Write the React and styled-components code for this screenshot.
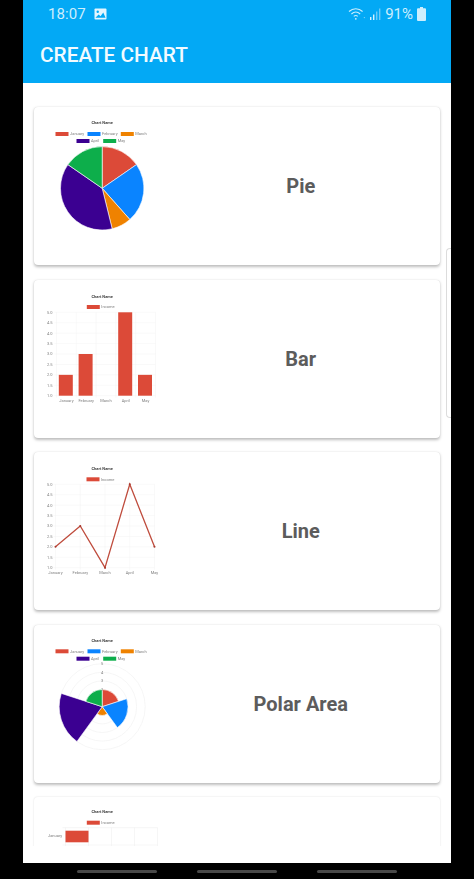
import React from "react";
import styled, { createGlobalStyle } from "styled-components";

const RED = "#dc4a38", BLUE = "#0a84ff", ORANGE = "#ef8200", PURPLE = "#3b0091", GREEN = "#0dae4b";
const COLORS = [RED, BLUE, ORANGE, PURPLE, GREEN];
const MONTHS = ["January", "February", "March", "April", "May"];
const DATA = [2, 3, 1, 5, 2];
const FONT = `Roboto, "Liberation Sans", sans-serif`;

const Global = createGlobalStyle`
  html, body { margin: 0; padding: 0; background: #000; }
  body { font-family: ${FONT}; }
`;

const Page = styled.div`
  width: 474px; height: 879px; background: #000; overflow: hidden;
  display: flex; flex-direction: column; align-items: center;
`;
const Screen = styled.div`
  position: relative; width: 428px; height: 863px; background: #fff;
  display: flex; flex-direction: column;
`;
const Header = styled.header`
  height: 83px; background: #03a9f5; color: #fff; flex: none;
  display: flex; flex-direction: column;
`;
const StatusBar = styled.div`
  height: 27px; padding: 0 25px; display: flex; align-items: center;
  justify-content: space-between; color: #cdeefd; font-size: 15px;
`;
const StatusGroup = styled.div`display: flex; align-items: center; gap: ${p => p.$gap}px;`;
const Clock = styled.span`letter-spacing: 0.1px;`;
const Toolbar = styled.div`
  flex: 1; display: flex; align-items: center; padding: 0 17px;
  font-size: 20.8px; font-weight: 500; color: #f2fbff;
`;
const Content = styled.main`
  height: 763px; flex: none; overflow: hidden; padding: 24px 11px 0 10.5px;
  display: flex; flex-direction: column; gap: 14.5px; box-sizing: border-box;
`;
const Card = styled.section`
  flex: none; height: 158px; border-radius: 4px; background: #fff;
  box-shadow: ${p => (p.$faint
    ? "0 0 2px rgba(0,0,0,.14)"
    : "0 1.5px 3px rgba(0,0,0,.26), 0 0 1px rgba(0,0,0,.1)")};
  display: grid; grid-template-columns: 128px 1fr; align-items: center;
`;
const CardLabel = styled.h2`
  margin: 0; text-align: center; color: #5c5c5c;
  font-size: 20px; font-weight: 700; font-family: ${FONT};
`;
const ChartSvg = styled.svg`
  display: block; width: 130px; height: 158px; overflow: visible; filter: blur(0.4px);
`;
const Handle = styled.div`
  position: absolute; right: 0; top: 248px; width: 4px; height: 168px;
  border: 1px solid #dcdcdc; border-right: none; border-radius: 4px 0 0 4px;
`;
const NavBar = styled.nav`
  flex: none; height: 16px; display: flex; justify-content: center; align-items: center; gap: 40px;
`;
const NavPill = styled.span`width: 80px; height: 3px; border-radius: 2px; background: #484848;`;

const Title = ({ y }) => (
  <text x="101.7" y={y + 1.4} textAnchor="middle" fontSize="4" fontWeight="700" fill="#444" fontFamily={FONT}>Chart Name</text>
);
const Small = ({ x, y, anchor = "start", children }) => (
  <text x={x} y={y + 1.4} textAnchor={anchor} fontSize="4" fill="#808080" fontFamily={FONT}>{children}</text>
);
const LegendItem = ({ x, y, color, label }) => (
  <g>
    <rect x={x} y={y - 2} width="13" height="4" fill={color} />
    <Small x={x + 14.5} y={y}>{label}</Small>
  </g>
);
const FullLegend = ({ y1, y2 }) => (
  <g>
    <LegendItem x={55} y={y1} color={RED} label="January" />
    <LegendItem x={87} y={y1} color={BLUE} label="February" />
    <LegendItem x={120.3} y={y1} color={ORANGE} label="March" />
    <LegendItem x={76} y={y2} color={PURPLE} label="April" />
    <LegendItem x={102.7} y={y2} color={GREEN} label="May" />
  </g>
);
const Chart = ({ top, children }) => (
  <ChartSvg viewBox={`33.5 ${top} 130 158`}>{children}</ChartSvg>
);
const polar = (cx, cy, r, deg) => {
  const a = (deg * Math.PI) / 180;
  return [cx + r * Math.sin(a), cy - r * Math.cos(a)];
};
const sector = (cx, cy, r, a0, a1) => {
  const [x0, y0] = polar(cx, cy, r, a0);
  const [x1, y1] = polar(cx, cy, r, a1);
  return `M${cx} ${cy}L${x0} ${y0}A${r} ${r} 0 ${a1 - a0 > 180 ? 1 : 0} 1 ${x1} ${y1}Z`;
};

const PieChart = () => {
  const total = DATA.reduce((a, b) => a + b, 0);
  let angle = 0;
  return (
    <Chart top={107}>
      <Title y={123} />
      <FullLegend y1={134} y2={141} />
      {DATA.map((v, i) => {
        const from = angle;
        angle += (v / total) * 360;
        return <path key={i} d={sector(101.7, 188.3, 41.7, from, angle)} fill={COLORS[i]} stroke="#fff" strokeWidth="0.6" />;
      })}
    </Chart>
  );
};

const CartesianGrid = ({ left, right, top, bottom, xs }) => (
  <g stroke="#f0f0f0" strokeWidth="0.4">
    {[0, 1, 2, 3, 4, 5, 6, 7, 8].map(i => {
      const y = top + ((bottom - top) * i) / 8;
      return <line key={i} x1={left - 2} x2={right} y1={y} y2={y} />;
    })}
    {xs.map(x => <line key={x} x1={x} x2={x} y1={top} y2={bottom + 2} />)}
  </g>
);
const YTicks = ({ x, top, bottom }) => (
  <g>
    {["5.0", "4.5", "4.0", "3.5", "3.0", "2.5", "2.0", "1.5", "1.0"].map((t, i) => (
      <Small key={t} x={x} y={top + ((bottom - top) * i) / 8} anchor="end">{t}</Small>
    ))}
  </g>
);

const BarChart = () => {
  const top = 311.3, bottom = 394.7, left = 56, step = 19.8;
  const yOf = v => bottom - ((v - 1) / 4) * (bottom - top);
  return (
    <Chart top={279}>
      <Title y={295.3} />
      <LegendItem x={86.3} y={306} color={RED} label="Income" />
      <CartesianGrid left={left} right={155} top={top} bottom={bottom} xs={[0, 1, 2, 3, 4, 5].map(i => left + i * step)} />
      <YTicks x={52} top={top} bottom={bottom} />
      {DATA.map((v, i) => (
        <rect key={i} x={left + i * step + 2.3} y={yOf(v)} width="14" height={bottom - yOf(v)} fill={RED} />
      ))}
      {MONTHS.map((m, i) => <Small key={m} x={left + (i + 0.5) * step} y={399.5} anchor="middle">{m}</Small>)}
    </Chart>
  );
};

const LineChart = () => {
  const top = 483.3, bottom = 566.7, left = 55, step = 24.75;
  const pts = DATA.map((v, i) => [left + i * step, bottom - ((v - 1) / 4) * (bottom - top)]);
  return (
    <Chart top={451}>
      <Title y={467.3} />
      <LegendItem x={86} y={478.3} color={RED} label="Income" />
      <CartesianGrid left={left} right={154} top={top} bottom={bottom} xs={pts.map(p => p[0])} />
      <YTicks x={52} top={top} bottom={bottom} />
      <polyline points={pts.map(p => p.join(",")).join(" ")} fill="none" stroke="#bf4c3d" strokeWidth="1.3" />
      {pts.map(p => <circle key={p[0]} cx={p[0]} cy={p[1]} r="1" fill="#a83a2e" />)}
      {MONTHS.map((m, i) => <Small key={m} x={left + i * step} y={572} anchor="middle">{m}</Small>)}
    </Chart>
  );
};

const PolarChart = () => {
  const cx = 101.7, cy = 705.7, unit = 8.6;
  return (
    <Chart top={624}>
      <Title y={639.7} />
      <FullLegend y1={650.3} y2={657.7} />
      {[1, 2, 3, 4, 5].map(n => <circle key={n} cx={cx} cy={cy} r={n * unit} fill="none" stroke="#ececec" strokeWidth="0.5" />)}
      {DATA.map((v, i) => (
        <path key={i} d={sector(cx, cy, v * unit, i * 72, (i + 1) * 72)} fill={COLORS[i]} stroke="#fff" strokeWidth="0.6" />
      ))}
      {[2, 3, 4, 5].map(n => <Small key={n} x={cx} y={cy - n * unit} anchor="middle">{n}</Small>)}
    </Chart>
  );
};

const HorizontalChart = () => (
  <Chart top={797}>
    <Title y={811.7} />
    <LegendItem x={86.3} y={822.7} color={RED} label="Income" />
    <g stroke="#e8e8e8" strokeWidth="0.4">
      {[65, 88, 111, 134, 157].map(x => <line key={x} x1={x} x2={x} y1={827.7} y2={850} />)}
      <line x1="62" x2="157" y1="827.7" y2="827.7" />
      <line x1="62" x2="157" y1="845" y2="845" />
    </g>
    <rect x="65" y="830.7" width="23" height="11.6" fill={RED} />
    <Small x={61.7} y={836} anchor="end">January</Small>
  </Chart>
);

const PictureIcon = () => (
  <svg width="13" height="12" viewBox="0 0 14 13">
    <rect x="0.5" y="0.5" width="13" height="12" rx="1" fill="#e4f6ff" />
    <circle cx="4" cy="4" r="1.3" fill="#03a9f5" />
    <path d="M1.5 10.5 5 7l2 2 3-4 2.5 5.5z" fill="#03a9f5" />
  </svg>
);
const WifiIcon = () => (
  <svg width="18" height="14" viewBox="0 0 18 14" fill="none" stroke="#cdeefd" strokeWidth="1.1">
    <path d="M1 4.5C5 .8 10.6.8 14.6 4.5" />
    <path d="M3.4 7c2.7-2.4 6.1-2.4 8.8 0" />
    <path d="M5.8 9.4c1.3-1.1 2.7-1.1 4 0" />
    <circle cx="7.8" cy="11.8" r="0.9" fill="#cdeefd" stroke="none" />
    <circle cx="16.4" cy="10.6" r="0.7" fill="#cdeefd" stroke="none" opacity="0.6" />
  </svg>
);
const SignalIcon = () => (
  <svg width="11" height="12" viewBox="0 0 11 12">
    <rect x="0" y="9" width="1.4" height="3" fill="#d6f1fe" />
    <rect x="3" y="6.5" width="1.4" height="5.5" fill="#d6f1fe" />
    <rect x="6" y="3.5" width="1.4" height="8.5" fill="#6fcbf7" />
    <rect x="9" y="0.5" width="1.4" height="11.5" fill="#6fcbf7" />
  </svg>
);
const BatteryIcon = () => (
  <svg width="9" height="14" viewBox="0 0 9 14">
    <path d="M3 0h3v1.2h2a1 1 0 0 1 1 1V13a1 1 0 0 1-1 1H1a1 1 0 0 1-1-1V2.2a1 1 0 0 1 1-1h2z" fill="#cdeefd" />
  </svg>
);

const CHARTS = [
  ["Pie", PieChart],
  ["Bar", BarChart],
  ["Line", LineChart],
  ["Polar Area", PolarChart],
  ["Horizontal Bar", HorizontalChart],
];

export default function App() {
  return (
    <Page>
      <Global />
      <Screen>
        <Header>
          <StatusBar>
            <StatusGroup $gap={8}><Clock>18:07</Clock><PictureIcon /></StatusGroup>
            <StatusGroup $gap={4}>
              <WifiIcon /><SignalIcon /><span>91%</span><BatteryIcon />
            </StatusGroup>
          </StatusBar>
          <Toolbar>CREATE CHART</Toolbar>
        </Header>
        <Content>
          {CHARTS.map(([label, Comp], i) => (
            <Card key={label} $faint={i === 4}>
              <Comp />
              {i < 4 && <CardLabel>{label}</CardLabel>}
            </Card>
          ))}
        </Content>
        <Handle />
      </Screen>
      <NavBar><NavPill /><NavPill /><NavPill /></NavBar>
    </Page>
  );
}
